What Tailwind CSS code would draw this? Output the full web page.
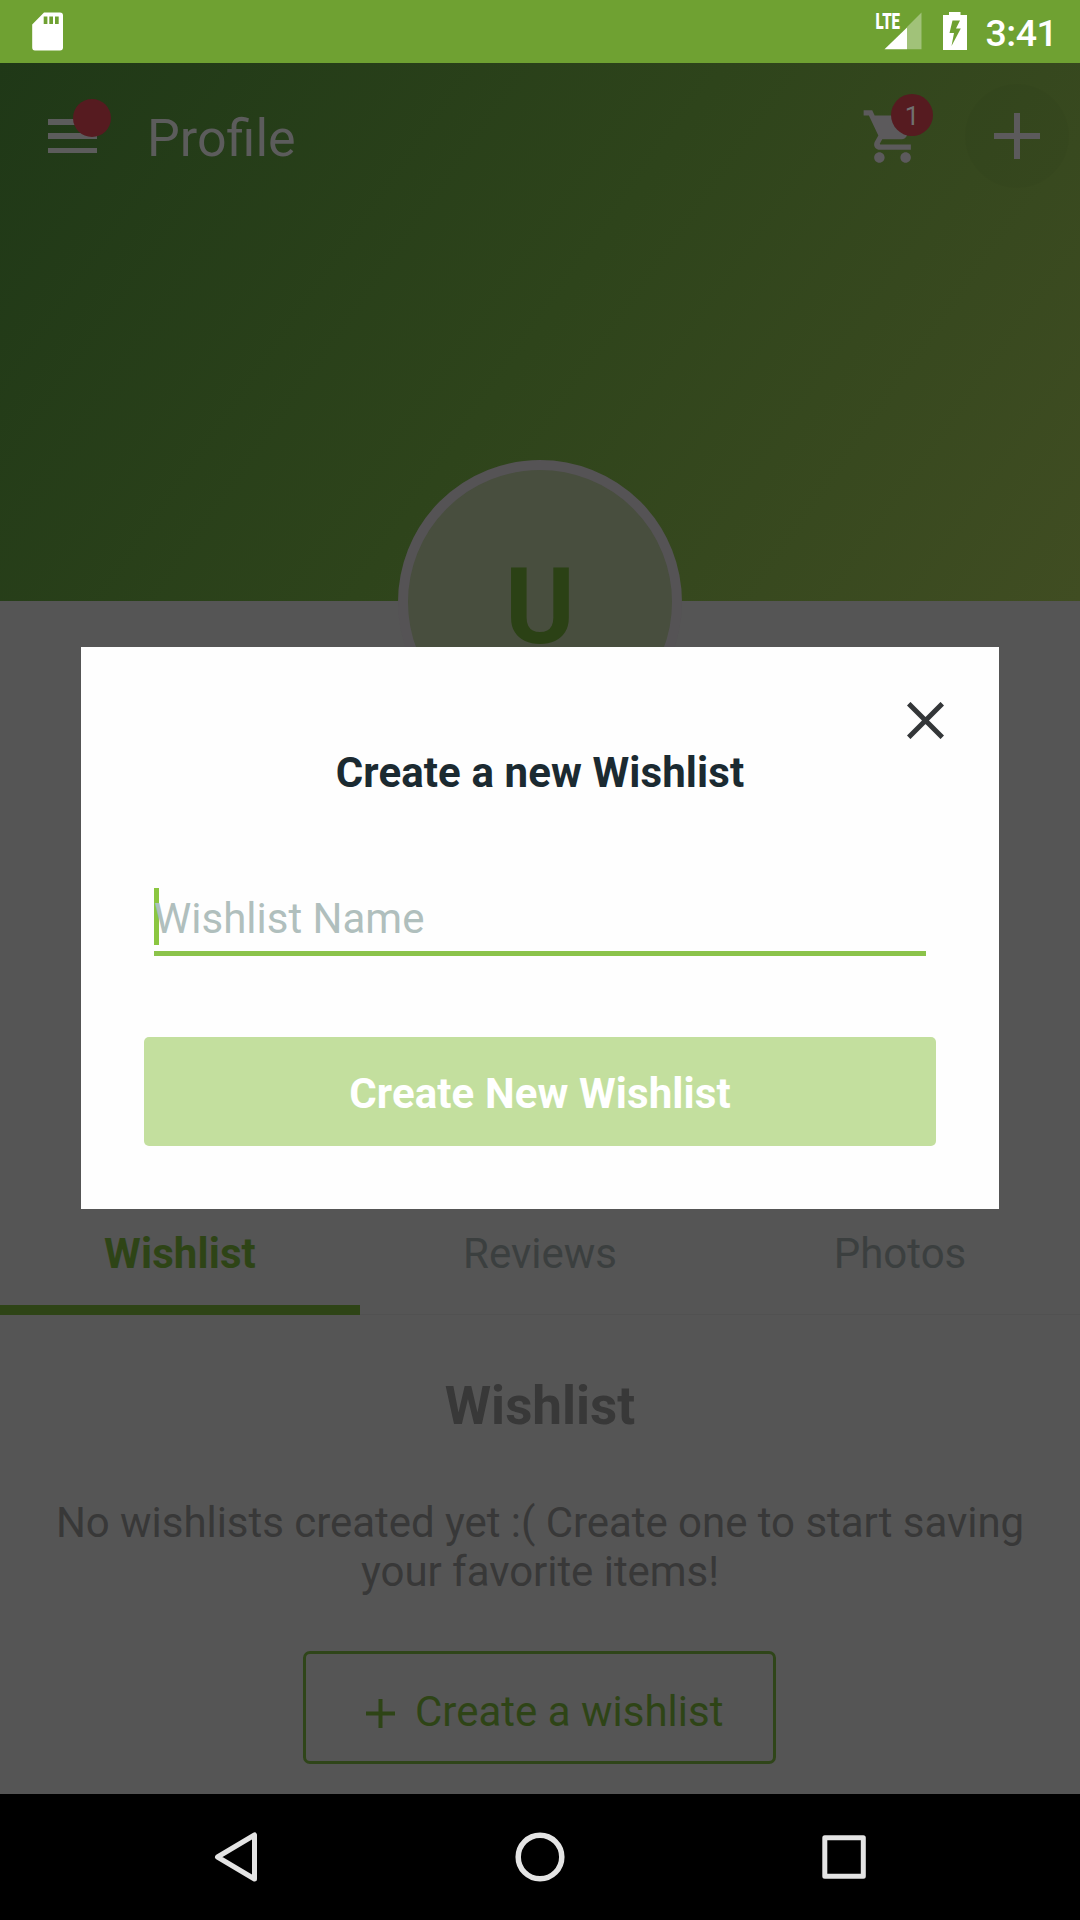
<!DOCTYPE html>
<html lang="en">
<head>
<meta charset="utf-8">
<title>Profile</title>
<script src="https://cdn.jsdelivr.net/npm/@tailwindcss/browser@4"></script>
</head>
<body class="font-['Roboto',sans-serif]">
<div class="relative flex h-[1920px] w-[1080px] flex-col overflow-hidden bg-[#555555] text-[42px] leading-[49px]">

  <!-- Status bar -->
  <div class="flex h-[63px] shrink-0 items-start bg-[#6fa132] text-white">
    <svg class="mt-3 ml-8 h-[39px] w-8" viewBox="0 0 32 39" fill="none"><path fill="#fff" fill-rule="evenodd" d="M12 .6H28Q31 .6 31 3.6V35.500Q31 38.500 28 38.500H3Q.2 38.500 .2 35.500V12.500ZM11.700 4.500V12H15.400V4.500ZM17.300 4.500V12H21V4.500ZM23 4.500V12H26.700V4.500Z"/></svg>
    <svg class="mt-2 ml-[807px] h-[42px] w-[52px] overflow-visible" viewBox="-4 -4 52 42"><path fill="#fff" fill-opacity=".35" d="M46.500 .6V37.300H32V15Z"/><path fill="#fff" d="M9.500 37.300L32 15.500V37.300Z"/><text x="0.500" y="17.300" font-family="Roboto" font-weight="900" font-size="22" textLength="24.500" lengthAdjust="spacingAndGlyphs" fill="#fff">LTE</text></svg>
    <svg class="mt-3 ml-[20px] h-[38px] w-[24px]" viewBox="0 0 24 38"><path fill="#fff" fill-rule="evenodd" d="M6 0H17.500V3H24V38H0V3H6ZM9.500 8.500L6.500 21H11L8.500 34L17.800 16.500H13L17 8.500Z"/></svg>
    <div class="ml-[18.5px] mt-[9px] text-[37.5px] leading-[49px] font-medium tracking-[-0.5px]">3:41</div>
  </div>

  <!-- Profile header -->
  <header class="relative h-[538px] shrink-0 bg-[linear-gradient(125deg,#1f3817_0%,#2e441b_50%,#404d22_100%)] text-[#5c5c5c]">
    <div class="flex h-[146px] items-center">
      <div class="relative ml-12 h-[34px] w-[49px]">
        <div class="flex h-full flex-col justify-between">
          <div class="h-[5.5px] bg-[#5c5c5c]"></div><div class="h-[5.5px] bg-[#5c5c5c]"></div><div class="h-[5.5px] bg-[#5c5c5c]"></div>
        </div>
        <span class="absolute -top-[20px] left-[25px] size-[38px] rounded-full bg-[#561b20]"></span>
      </div>
      <h1 class="ml-[50px] pt-[5px] text-[52px] leading-[61px]">Profile</h1>
      <div class="relative ml-auto size-[63px]">
        <svg class="size-full" viewBox="0 0 24 24" fill="#5c5a5c"><path d="M7 18c-1.100 0-1.990.9-1.990 2S5.900 22 7 22s2-.9 2-2-.9-2-2-2zM1 2v2h2l3.600 7.590-1.350 2.450c-.16.280-.25.610-.25.960 0 1.100.9 2 2 2h12v-2H7.420c-.14 0-.25-.11-.25-.25l.03-.12.900-1.630h7.450c.75 0 1.410-.41 1.750-1.030l3.580-6.490c.08-.14.120-.31.120-.48 0-.55-.45-1-1-1H5.210l-.94-2H1zm16 16c-1.100 0-1.990.9-1.990 2s.89 2 1.990 2 2-.9 2-2-.9-2-2-2z"/></svg>
        <span class="absolute -top-[11px] left-[30px] flex size-[42px] items-center justify-center rounded-full bg-[#561b20] pt-[2px] text-[26px] leading-none text-[#707070]">1</span>
      </div>
      <div class="mr-[11px] ml-[41px] flex size-[104px] items-center justify-center rounded-full bg-black/2">
        <svg class="size-[46px]" viewBox="0 0 46 46" stroke="#5c5a5c" stroke-width="6"><path d="M0 23H46M23 0V46"/></svg>
      </div>
    </div>
    <div class="absolute top-[397px] left-[398px] flex size-[284px] items-center justify-center rounded-full border-[10px] border-[#555355] bg-[#484e3e] pt-[9px] text-[106px] leading-none font-bold text-[#2b4115]">U</div>
  </header>

  <!-- Tabs -->
  <nav class="mt-[591px] grid h-[123px] shrink-0 grid-cols-3 border-b border-[#515151] text-center text-[#3b3f3f]">
    <div class="-mb-px border-b-[10px] border-[#2e4416] pt-[37px] font-bold tracking-[0.1px] text-[#2e4416]">Wishlist</div>
    <div class="pt-[37px]">Reviews</div>
    <div class="pt-[37px]">Photos</div>
  </nav>

  <main class="flex h-[479px] shrink-0 flex-col items-center text-center text-[#383838]">
    <h2 class="mt-[60px] text-[53px] leading-[62px] font-bold">Wishlist</h2>
    <p class="mt-[61px] w-[1000px] tracking-[-0.04px]">No wishlists created yet :( Create one to start saving your favorite items!</p>
    <div class="mt-[55px] mr-px flex h-[113px] w-[473px] items-center rounded-[7px] border-[3px] border-[#2f4519] pl-[60px] text-[#2e4416]">
      <svg class="mt-[12px] size-[29px]" viewBox="0 0 29 29" stroke="#2e4416" stroke-width="4"><path d="M0 14.500H29M14.500 0V29"/></svg>
      <span class="mt-[8px] ml-[20px]">Create a wishlist</span>
    </div>
  </main>

  <!-- System navigation -->
  <div class="flex h-[126px] shrink-0 items-center justify-between bg-black px-[211px]">
    <svg class="size-[52px]" viewBox="0 0 52 52" fill="none" stroke="#e4e4e4" stroke-width="5" stroke-linejoin="round"><path d="M43.500 4V48L6.500 26Z"/></svg>
    <svg class="size-[52px]" viewBox="0 0 52 52" fill="none" stroke="#e4e4e4" stroke-width="5.500"><circle cx="26" cy="26" r="21.800"/></svg>
    <svg class="size-[52px]" viewBox="0 0 52 52" fill="none" stroke="#e4e4e4" stroke-width="5" stroke-linejoin="round"><rect x="7.800" y="6.800" width="38.500" height="38.500"/></svg>
  </div>

  <!-- Create wishlist dialog -->
  <div class="absolute top-[647px] left-[81px] flex h-[562px] w-[918px] flex-col bg-[#fefefe] px-[63px]">
    <svg class="mt-[55px] mr-[-8px] size-[37px] self-end" viewBox="0 0 37 37" stroke="#333638" stroke-width="5"><path d="M1.700 1.700L35.300 35.300M35.300 1.700L1.700 35.300"/></svg>
    <h3 class="mt-[9px] text-center font-bold tracking-[0.1px] text-[#1b2a31]">Create a new Wishlist</h3>
    <div class="relative mx-[10px] mt-[91px] h-[68px] border-b-[5px] border-[#8bc34a] pt-[6px] text-[#b0bfbd]">
      <span class="absolute top-0 left-0 h-[57px] w-[5px] bg-[#8bc640]"></span>
      <span class="relative">Wishlist Name</span>
    </div>
    <button class="mt-[81px] h-[109px] rounded-[5px] bg-[#c3df9e] pt-[4px] font-bold tracking-[0.1px] text-white">Create New Wishlist</button>
  </div>
</div>
</body>
</html>
